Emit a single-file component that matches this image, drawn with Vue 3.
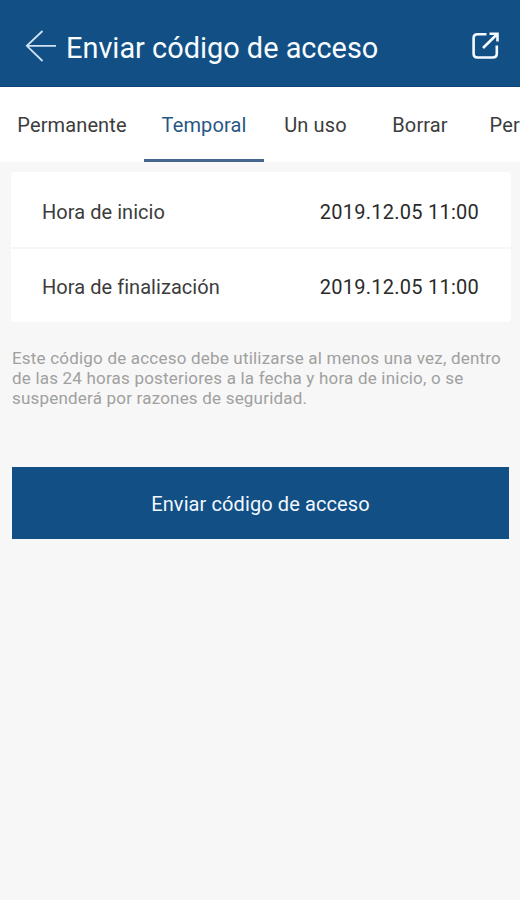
<script setup>
const tabs = [
  { id: 'perm', label: 'Permanente' },
  { id: 'temp', label: 'Temporal', active: true },
  { id: 'once', label: 'Un uso' },
  { id: 'erase', label: 'Borrar' },
  { id: 'custom', label: 'Período' },
]
const rows = [
  { label: 'Hora de inicio', value: '2019.12.05 11:00' },
  { label: 'Hora de finalización', value: '2019.12.05 11:00' },
]
</script>

<template>
  <main class="screen">
    <header class="bar">
      <svg class="back" viewBox="0 0 32 32" width="32" height="32">
        <path d="M17.5 1 1.8 15.8 17.5 31M1.8 15.8H31" />
      </svg>
      <h1 class="title">Enviar código de acceso</h1>
      <svg class="share" viewBox="0 0 28 28" width="28" height="28">
        <path d="M14.5 2.2H5.5Q1.6 2.2 1.6 6V21.5Q1.6 25.5 5.5 25.5H20.8Q24.8 25.5 24.8 21.5V13.5M11 16 25 2.2M17.5 1.8H25.5V9.5" />
      </svg>
    </header>
    <nav class="tabs">
      <button v-for="t in tabs" :key="t.id" class="tab" :class="[t.id, { active: t.active }]">{{ t.label }}</button>
    </nav>
    <section class="card">
      <div v-for="r in rows" :key="r.label" class="row">
        <span class="label">{{ r.label }}</span>
        <span class="value">{{ r.value }}</span>
      </div>
    </section>
    <p class="note">Este código de acceso debe utilizarse al menos una vez, dentro<br />de las 24 horas posteriores a la fecha y hora de inicio, o se<br />suspenderá por razones de seguridad.</p>
    <button class="send">Enviar código de acceso</button>
  </main>
</template>

<style>
body { background: #f7f7f7; }
</style>

<style scoped>
.screen {
  width: 520px;
  height: 900px;
  overflow: hidden;
  background: #f7f7f7;
  font-family: Roboto, "Liberation Sans", sans-serif;
  color: #333;
}
.bar {
  display: flex;
  align-items: center;
  box-sizing: border-box;
  height: 87px;
  padding: 5px 20px 0 25px;
  background: #114f84;
  border-bottom: 1px solid #0c4378;
}
.back, .share { fill: none; stroke: #f4faff; flex: none; }
.back { stroke: #cfe2f4; stroke-width: 1.8; }
.share { stroke-width: 2.6; }
.title {
  flex: 1;
  margin: 5px 0 0 9px;
  font-size: 28.9px;
  line-height: 36px;
  font-weight: 400;
  color: #f8fcff;
  white-space: nowrap;
}
.tabs {
  display: flex;
  height: 75px;
  background: #fff;
  overflow: hidden;
}
.tab {
  box-sizing: border-box;
  flex: none;
  height: 75px;
  padding: 4px 0 0;
  border: 0;
  border-bottom: 3px solid transparent;
  background: none;
  font: inherit;
  font-size: 20px;
  letter-spacing: 0.12px;
  color: #3c3c3c;
}
.perm { width: 144px; }
.temp { width: 120px; }
.once { width: 103px; }
.erase { width: 106px; }
.custom { width: 103px; }
.tab.active { color: #285784; border-bottom-color: #46678d; }
.card {
  margin: 10px 9px 0 11px;
  background: #fff;
  border-radius: 4px;
}
.row {
  display: flex;
  align-items: center;
  justify-content: space-between;
  box-sizing: border-box;
  height: 75px;
  padding: 4px 32px 0 31px;
  font-size: 20px;
}
.row + .row { padding-top: 2px; border-top: 2px solid #f7f7f7; }
.label { color: #3c3c3c; letter-spacing: 0.05px; }
.value { color: #2a2a2a; letter-spacing: 0.25px; }
.note {
  margin: 26px 0 0 12px;
  font-size: 17px;
  line-height: 20px;
  letter-spacing: 0.2px;
  color: #a0a0a0;
  white-space: nowrap;
}
.send {
  display: block;
  width: 497px;
  height: 72px;
  margin: 59px 0 0 12px;
  padding: 2px 0 0;
  border: 0;
  background: #114f84;
  color: #f2f8ff;
  font: inherit;
  font-size: 20px;
  letter-spacing: 0.1px;
}
</style>
